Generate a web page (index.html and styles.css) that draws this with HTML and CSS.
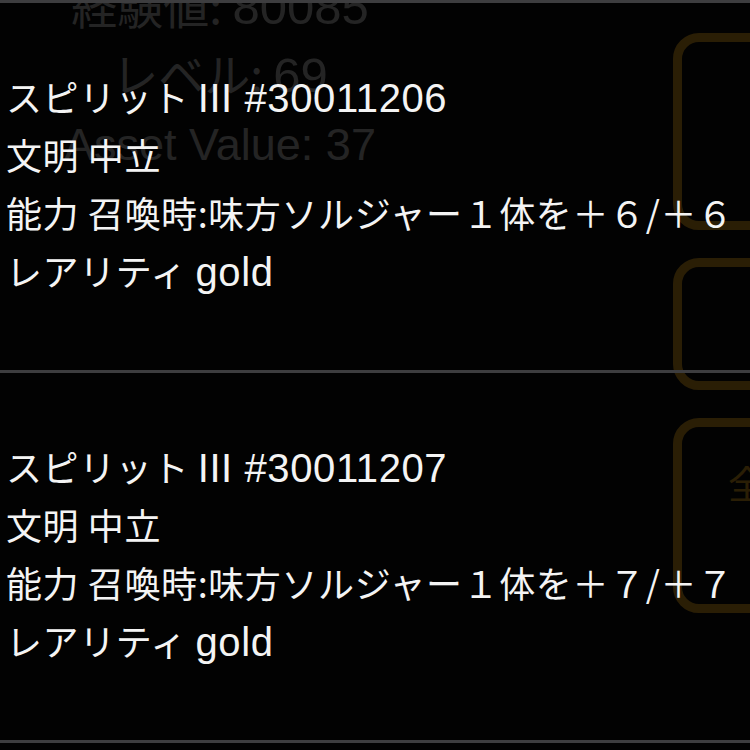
FILE: index.html
```html
<!DOCTYPE html>
<html lang="ja">
<head>
<meta charset="utf-8">
<title>Cards</title>
<link rel="stylesheet" href="styles.css">
</head>
<body>
<div class="page">
  <div class="bg">
    <div class="stats">
      <div class="stat">経験値: <span class="latin">80085</span></div>
      <div class="stat">レベル: <span class="latin">69</span></div>
      <div class="stat"><span class="latin latin-sm">Asset Value: 37</span></div>
    </div>
    <div class="actions">
      <div class="btn b1"></div>
      <div class="btn b2"></div>
      <div class="btn b3"><span class="btn-label">全</span></div>
    </div>
  </div>
  <div class="modal">
    <div class="list">
      <div class="item">
        <div class="line">スピリット <span class="latin">III #30011206</span></div>
        <div class="line">文明 中立</div>
        <div class="line">能力 召喚時:味方ソルジャー１体を＋６/＋６</div>
        <div class="line">レアリティ <span class="latin">gold</span></div>
      </div>
      <div class="item">
        <div class="line">スピリット <span class="latin">III #30011207</span></div>
        <div class="line">文明 中立</div>
        <div class="line">能力 召喚時:味方ソルジャー１体を＋７/＋７</div>
        <div class="line">レアリティ <span class="latin">gold</span></div>
      </div>
    </div>
  </div>
</div>
</body>
</html>
```

FILE: styles.css
```css
html, body {
  margin: 0;
  padding: 0;
  background: #0b0b0d;
}

.page {
  position: relative;
  width: 750px;
  height: 750px;
  overflow: hidden;
  font-family: "Noto Sans CJK JP", "Noto Sans", sans-serif;
}

.bg {
  display: flex;
  height: 750px;
  overflow: hidden;
}

.stats {
  width: 440px;
  margin-top: -30px;
  text-align: center;
  color: #c8c8c8;
  font-size: 46px;
  line-height: 68px;
}

.stats .latin {
  font-family: "Liberation Sans", "Noto Sans CJK JP", sans-serif;
  font-size: 49px;
  line-height: 1;
}

.stats .latin-sm {
  font-size: 45px;
}

.actions {
  margin-left: auto;
  width: 77px;
  padding-top: 33px;
  display: flex;
  flex-direction: column;
  gap: 28px;
}

.btn {
  box-sizing: border-box;
  width: 150px;
  border: 9px solid #e6a520;
  border-radius: 26px;
  flex: none;
}

.b1 { height: 197px; }
.b2 { height: 132px; }
.b3 {
  height: 195px;
  padding: 36px 0 0 46px;
}

.btn-label {
  display: block;
  color: #e6a520;
  font-size: 38px;
  line-height: 1;
}

.modal {
  position: absolute;
  inset: 0;
  background: rgba(0, 0, 0, 0.82);
}

.list {
  border-top: 3px solid #3d3d3f;
}

.item {
  padding: 64px 6px 71px;
  border-bottom: 3px solid #3d3d3f;
  color: #f4f4f4;
  font-size: 36px;
  line-height: 58px;
  letter-spacing: 0.6px;
}

.item .latin {
  font-family: "Liberation Sans", "Noto Sans CJK JP", sans-serif;
  font-size: 40px;
  line-height: 1;
  letter-spacing: 0.6px;
}

.line {
  white-space: nowrap;
}
```
